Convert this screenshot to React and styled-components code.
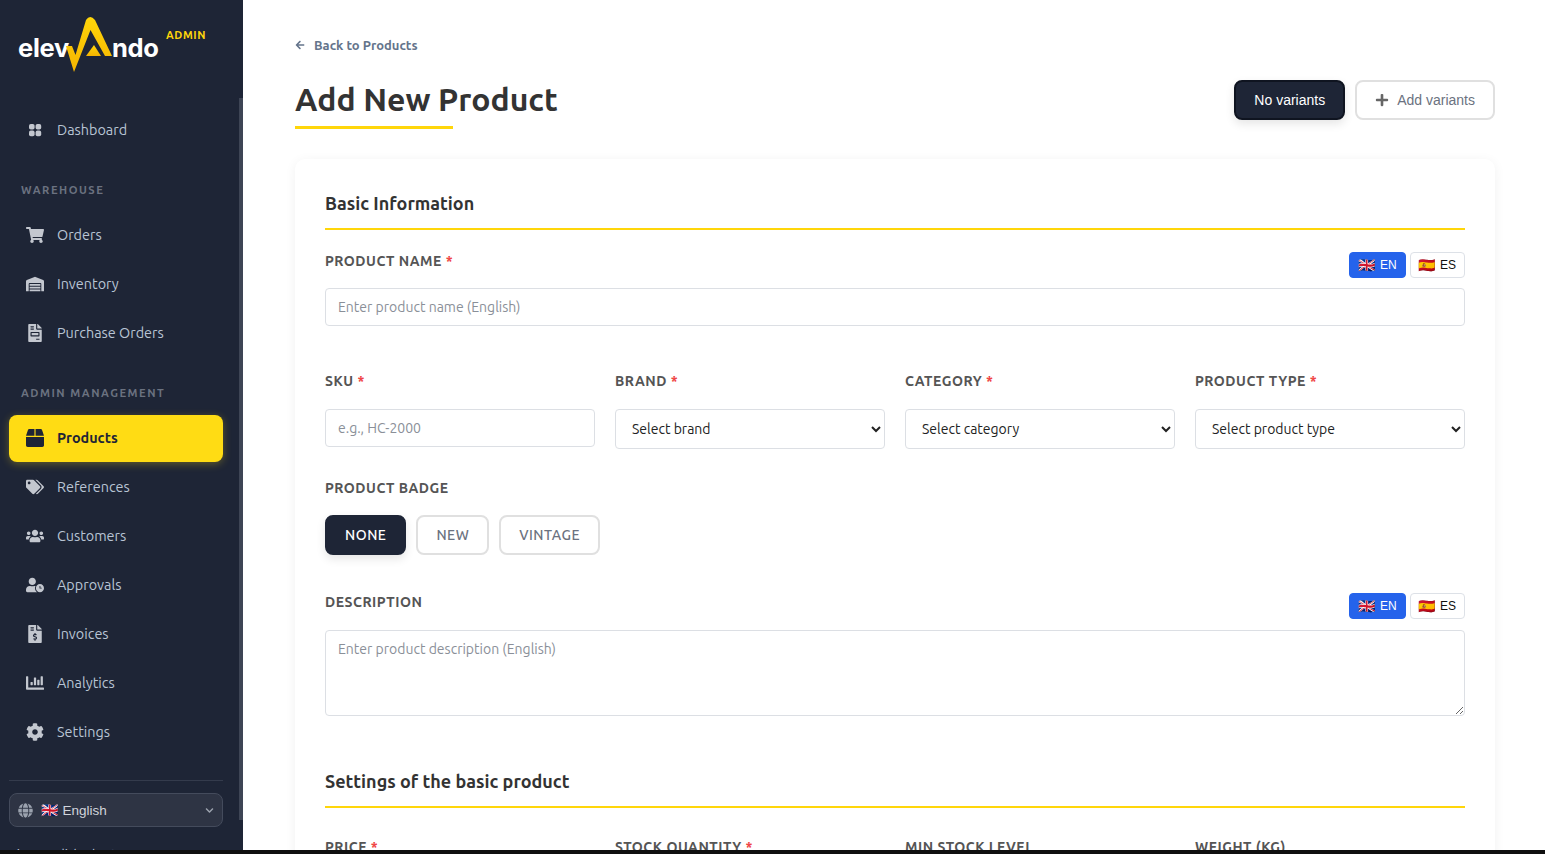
import React from 'react';
import styled, { createGlobalStyle } from 'styled-components';
import {
  FaShoppingCart,
  FaWarehouse,
  FaFileInvoice,
  FaBox,
  FaTags,
  FaUsers,
  FaUserClock,
  FaFileInvoiceDollar,
  FaChartBar,
  FaCog,
  FaGlobe,
  FaChevronDown,
  FaPlus,
  FaArrowLeft,
} from 'react-icons/fa';

const UI = `Ubuntu, "Noto Sans", "Open Sans", sans-serif`;

const Global = createGlobalStyle`
  html, body { margin: 0; height: 100%; background: #0f0f0f; overflow: hidden; }
  * { box-sizing: border-box; }
  #root { height: 850px; overflow: hidden; }
`;

const Shell = styled.div`
  display: flex;
  height: 850px;
  font-family: ${UI};
  background: #fff;
  overflow: hidden;
`;

const Sidebar = styled.aside`
  position: relative;
  width: 243px;
  flex: none;
  background: #1e2536;
  display: flex;
  flex-direction: column;
  padding: 0 20px 0 9px;
  overflow: hidden;
`;

const ScrollThumb = styled.div`
  position: absolute;
  right: 0;
  top: 98px;
  width: 4px;
  height: 722px;
  background: #3e4555;
`;

const LogoRow = styled.div`
  position: relative;
  height: 76px;
  margin: 0 0 0 9px;
  padding-top: 16px;
  display: flex;
  align-items: flex-start;
`;

const LogoWord = styled.span`
  font-family: Inter, "Liberation Sans", sans-serif;
  font-size: 25.5px;
  font-weight: 700;
  letter-spacing: -0.3px;
  line-height: 27px;
  color: #fff;
  margin-top: 18px;
`;

const LogoMark = styled.svg`
  width: 54px;
  height: 58px;
  flex: none;
  margin: 0 -1px 0 -10px;
`;

const AdminTag = styled.span`
  position: absolute;
  left: 148px;
  top: 29px;
  font-size: 11px;
  font-weight: 700;
  letter-spacing: 0.6px;
  color: #ffd60a;
`;

const Nav = styled.nav`
  display: flex;
  flex-direction: column;
  flex: 1;
`;

const NavItem = styled.a`
  display: flex;
  align-items: center;
  height: 47px;
  margin-top: ${(p) => p.$top || 0}px;
  margin-bottom: ${(p) => (p.$active ? 1 : 2)}px;
  padding-left: 17px;
  padding-bottom: ${(p) => (p.$active ? 1 : 0)}px;
  gap: 13px;
  border-radius: 8px;
  font-size: 14.4px;
  color: ${(p) => (p.$active ? '#1e2536' : '#b8c4d4')};
  font-weight: ${(p) => (p.$active ? 700 : 400)};
  background: ${(p) => (p.$active ? '#ffdc14' : 'transparent')};
  box-shadow: ${(p) => (p.$active ? '0 2px 8px rgba(255, 220, 20, 0.3)' : 'none')};
  svg {
    width: 18px;
    height: 18px;
    flex: none;
    color: ${(p) => (p.$active ? '#1e2536' : '#c3c7cf')};
  }
`;

const NavHeading = styled.div`
  height: 20px;
  line-height: 20px;
  margin: ${(p) => p.$top}px 0 ${(p) => p.$bottom}px 12px;
  font-size: 11.2px;
  font-weight: 600;
  letter-spacing: 1.5px;
  color: #6b7280;
`;

const Footer = styled.div`
  border-top: 1px solid #343b4c;
  padding-top: 12px;
  margin-top: auto;
  height: 70px;
  overflow: hidden;
`;

const LangSelect = styled.div`
  display: flex;
  align-items: center;
  height: 34px;
  padding: 0 8px 0 8px;
  border: 1px solid #444b5c;
  border-radius: 8px;
  background: #2e3444;
  font-family: "Liberation Sans", sans-serif;
  font-size: 13.5px;
  color: #d1d5db;
`;

const LangName = styled.span`
  margin-left: 4px;
  flex: 1;
`;

const SizeNote = styled.div`
  margin: 19px 0 0 1px;
  font-size: 13px;
  line-height: 16px;
  white-space: nowrap;
  color: #cbd5e1;
`;

const GlobeIcon = styled(FaGlobe)`
  width: 15px;
  height: 15px;
  color: #9ca3af;
  margin-right: 8px;
`;

const ChevronIcon = styled(FaChevronDown)`
  width: 9px;
  height: 9px;
  color: #9ca3af;
`;

const Main = styled.main`
  flex: 1;
  min-width: 0;
  padding: 35px 50px 0 52px;
`;

const BackLink = styled.a`
  display: flex;
  align-items: center;
  gap: 9px;
  height: 19px;
  font-size: 13px;
  font-weight: 600;
  color: #64748b;
  svg {
    width: 10px;
    height: 10px;
  }
`;

const TitleRow = styled.div`
  display: flex;
  justify-content: space-between;
  align-items: flex-start;
  margin-top: 26px;
`;

const Title = styled.h1`
  position: relative;
  margin: 0;
  font-size: 32px;
  line-height: 38px;
  font-weight: 600;
  color: #333;
  height: 49px;
  &::after {
    content: '';
    position: absolute;
    left: 0;
    bottom: 0;
    width: 158px;
    height: 3px;
    background: #ffd60a;
  }
`;

const VariantGroup = styled.div`
  display: flex;
  gap: 10px;
`;

const VariantButton = styled.button`
  display: flex;
  align-items: center;
  gap: 8px;
  height: 40px;
  padding: 0 18px;
  border-radius: 8px;
  font-family: "Liberation Sans", sans-serif;
  font-size: 14px;
  cursor: pointer;
  border: 2px solid ${(p) => (p.$active ? '#0f1420' : '#e0e0e0')};
  background: ${(p) => (p.$active ? '#1e2536' : '#fff')};
  color: ${(p) => (p.$active ? '#fff' : '#6b7280')};
  box-shadow: ${(p) => (p.$active ? '0 4px 10px rgba(0, 0, 0, 0.1)' : 'none')};
  svg {
    width: 14px;
    height: 14px;
    color: #666;
  }
`;

const Card = styled.section`
  margin-top: 30px;
  padding: 30px 30px 0;
  background: #fff;
  border-radius: 10px;
  box-shadow: 0 2px 12px rgba(0, 0, 0, 0.06);
  height: 800px;
`;

const SectionTitle = styled.h2`
  margin: ${(p) => p.$top || 0}px 0 0;
  height: 41px;
  padding-top: 1px;
  font-size: 18px;
  line-height: 27px;
  font-weight: 600;
  color: #333;
  border-bottom: 2px solid #ffd60a;
`;

const FieldHead = styled.div`
  display: flex;
  justify-content: space-between;
  align-items: flex-start;
  margin-top: ${(p) => p.$top}px;
  height: ${(p) => p.$height}px;
`;

const Label = styled.label`
  display: block;
  margin-top: ${(p) => p.$top || 0}px;
  margin-bottom: ${(p) => p.$gap || 0}px;
  font-size: 14px;
  line-height: 21px;
  font-weight: 600;
  letter-spacing: 0.5px;
  color: #555;
`;

const Required = styled.span`
  color: #ef4444;
`;

const LangTabs = styled.div`
  display: flex;
  gap: 4px;
  margin-top: 1px;
`;

const LangTab = styled.button`
  display: flex;
  align-items: center;
  gap: 4px;
  height: 26px;
  padding: 0 8px;
  border-radius: 4px;
  font-family: "Liberation Sans", sans-serif;
  font-size: 12px;
  border: 1px solid ${(p) => (p.$active ? '#2563eb' : '#dde1e7')};
  background: ${(p) => (p.$active ? '#2563eb' : '#fff')};
  color: ${(p) => (p.$active ? '#fff' : '#111')};
`;

const FlagEmoji = styled.span`
  font-family: "Noto Color Emoji", sans-serif;
  font-size: 14px;
  line-height: 1;
`;

const TextInput = styled.input`
  display: block;
  width: 100%;
  height: 38px;
  padding: 0 12px;
  border: 1px solid #dcdfe4;
  border-radius: 4px;
  font-family: ${UI};
  font-size: 14px;
  &::placeholder {
    color: #8a8f98;
  }
`;

const TextArea = styled.textarea`
  display: block;
  width: 100%;
  height: 86px;
  padding: 8px 12px;
  border: 1px solid #dcdfe4;
  border-radius: 4px;
  font-family: ${UI};
  font-size: 14px;
  line-height: 20px;
  &::placeholder {
    color: #8a8f98;
  }
`;

const Select = styled.select`
  display: block;
  width: 100%;
  height: 40px;
  padding: 0 12px;
  border: 1px solid #dcdfe4;
  border-radius: 4px;
  background: #fff;
  font-family: ${UI};
  font-size: 14px;
  color: #222;
`;

const FourCols = styled.div`
  display: grid;
  grid-template-columns: repeat(4, 1fr);
  column-gap: 20px;
  margin-top: ${(p) => p.$top}px;
`;

const BadgeRow = styled.div`
  display: flex;
  gap: 10px;
  margin-top: 16px;
`;

const BadgeButton = styled.button`
  height: 40px;
  padding: 0 18px;
  border-radius: 8px;
  font-family: ${UI};
  font-size: 14px;
  font-weight: 500;
  letter-spacing: 0.5px;
  border: 2px solid ${(p) => (p.$active ? '#1e2536' : '#e0e0e0')};
  background: ${(p) => (p.$active ? '#1e2536' : '#fff')};
  color: ${(p) => (p.$active ? '#fff' : '#6b7280')};
  box-shadow: ${(p) => (p.$active ? '0 4px 10px rgba(0, 0, 0, 0.1)' : 'none')};
`;

const DashboardIcon = () => (
  <svg viewBox="0 0 18 18" fill="currentColor">
    <rect x="3" y="3" width="5.6" height="5.6" rx="1.8" />
    <rect x="9.6" y="3" width="5.6" height="5.6" rx="1.8" />
    <rect x="3" y="9.6" width="5.6" height="5.6" rx="1.8" />
    <rect x="9.6" y="9.6" width="5.6" height="5.6" rx="1.8" />
  </svg>
);

const LangSwitch = () => (
  <LangTabs>
    <LangTab $active>
      <FlagEmoji>🇬🇧</FlagEmoji>
      EN
    </LangTab>
    <LangTab>
      <FlagEmoji>🇪🇸</FlagEmoji>
      ES
    </LangTab>
  </LangTabs>
);

const warehouseItems = [
  { label: 'Orders', icon: FaShoppingCart },
  { label: 'Inventory', icon: FaWarehouse },
  { label: 'Purchase Orders', icon: FaFileInvoice },
];

const adminItems = [
  { label: 'Products', icon: FaBox, active: true, top: 1 },
  { label: 'References', icon: FaTags },
  { label: 'Customers', icon: FaUsers },
  { label: 'Approvals', icon: FaUserClock },
  { label: 'Invoices', icon: FaFileInvoiceDollar },
  { label: 'Analytics', icon: FaChartBar },
  { label: 'Settings', icon: FaCog },
];

const renderItem = (item) => {
  const Icon = item.icon;
  return (
    <NavItem key={item.label} $active={item.active} $top={item.top}>
      <Icon />
      {item.label}
    </NavItem>
  );
};

export default function App() {
  return (
    <Shell>
      <Global />
      <Sidebar>
        <ScrollThumb />
        <LogoRow>
          <LogoWord>elev</LogoWord>
          <LogoMark viewBox="0 0 54 58">
            <defs>
              <linearGradient id="markFill" x1="0" y1="0" x2="0" y2="1">
                <stop offset="0" stopColor="#ffd60a" />
                <stop offset="1" stopColor="#f5b400" />
              </linearGradient>
            </defs>
            <path d="M7 30H13L16.5 39L27 4Q31 -2 36 4L53 40H46L31.5 14L15 56Z" fill="url(#markFill)" />
            <path d="M35 29L27 40H42Z" fill="url(#markFill)" />
          </LogoMark>
          <LogoWord>ndo</LogoWord>
          <AdminTag>ADMIN</AdminTag>
        </LogoRow>
        <Nav>
          <NavItem $top={30}>
            <DashboardIcon />
            Dashboard
          </NavItem>
          <NavHeading $top={25} $bottom={11}>WAREHOUSE</NavHeading>
          {warehouseItems.map(renderItem)}
          <NavHeading $top={25} $bottom={11}>ADMIN MANAGEMENT</NavHeading>
          {adminItems.map(renderItem)}
          <Footer>
            <LangSelect>
              <GlobeIcon />
              <FlagEmoji>🇬🇧</FlagEmoji>
              <LangName>English</LangName>
              <ChevronIcon />
            </LangSelect>
            <SizeNote>Size: English Chart</SizeNote>
          </Footer>
        </Nav>
      </Sidebar>
      <Main>
        <BackLink>
          <FaArrowLeft />
          Back to Products
        </BackLink>
        <TitleRow>
          <Title>Add New Product</Title>
          <VariantGroup>
            <VariantButton $active>No variants</VariantButton>
            <VariantButton>
              <FaPlus />
              Add variants
            </VariantButton>
          </VariantGroup>
        </TitleRow>
        <Card>
          <SectionTitle>Basic Information</SectionTitle>
          <FieldHead $top={21} $height={37}>
            <Label>PRODUCT NAME <Required>*</Required></Label>
            <LangSwitch />
          </FieldHead>
          <TextInput placeholder="Enter product name (English)" />
          <FourCols $top={45}>
            <div>
              <Label $gap={17}>SKU <Required>*</Required></Label>
              <TextInput placeholder="e.g., HC-2000" />
            </div>
            <div>
              <Label $gap={17}>BRAND <Required>*</Required></Label>
              <Select defaultValue="">
                <option value="">Select brand</option>
              </Select>
            </div>
            <div>
              <Label $gap={17}>CATEGORY <Required>*</Required></Label>
              <Select defaultValue="">
                <option value="">Select category</option>
              </Select>
            </div>
            <div>
              <Label $gap={17}>PRODUCT TYPE <Required>*</Required></Label>
              <Select defaultValue="">
                <option value="">Select product type</option>
              </Select>
            </div>
          </FourCols>
          <Label $top={29}>PRODUCT BADGE</Label>
          <BadgeRow>
            <BadgeButton $active>NONE</BadgeButton>
            <BadgeButton>NEW</BadgeButton>
            <BadgeButton>VINTAGE</BadgeButton>
          </BadgeRow>
          <FieldHead $top={37} $height={38}>
            <Label>DESCRIPTION</Label>
            <LangSwitch />
          </FieldHead>
          <TextArea placeholder="Enter product description (English)" />
          <SectionTitle $top={51}>Settings of the basic product</SectionTitle>
          <FourCols $top={29}>
            <Label>PRICE <Required>*</Required></Label>
            <Label>STOCK QUANTITY <Required>*</Required></Label>
            <Label>MIN STOCK LEVEL</Label>
            <Label>WEIGHT (KG)</Label>
          </FourCols>
        </Card>
      </Main>
    </Shell>
  );
}
